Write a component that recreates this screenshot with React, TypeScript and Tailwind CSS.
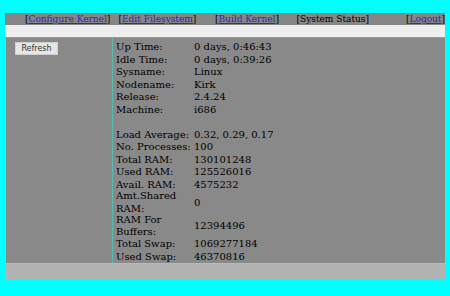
import React from "react";

const rows: [string, string][] = [
  ["Up Time:", "0 days, 0:46:43"],
  ["Idle Time:", "0 days, 0:39:26"],
  ["Sysname:", "Linux"],
  ["Nodename:", "Kirk"],
  ["Release:", "2.4.24"],
  ["Machine:", "i686"],
  ["", ""],
  ["Load Average:", "0.32, 0.29, 0.17"],
  ["No. Processes:", "100"],
  ["Total RAM:", "130101248"],
  ["Used RAM:", "125526016"],
  ["Avail. RAM:", "4575232"],
  ["Amt.Shared RAM:", "0"],
  ["RAM For Buffers:", "12394496"],
  ["Total Swap:", "1069277184"],
  ["Used Swap:", "46370816"],
];

export default function App() {
  const link = "text-[#2a2ab8] underline";
  return (
    <div className="w-[450px] h-[296px] bg-[#00ffff] pt-[13px] px-[5px] overflow-hidden">
      <div className="flex flex-col w-[440px]">
        <div
          className="h-[12px] bg-[#868686] flex items-center text-[9px] leading-[12px] text-black whitespace-nowrap"
          style={{ fontFamily: '"DejaVu Serif", serif' }}
        >
          <span className="ml-[20px] w-[94px]">
            [<span className={link}>Configure Kernel</span>]
          </span>
          <span className="w-[97px]">
            [<span className={link}>Edit Filesystem</span>]
          </span>
          <span className="w-[82px]">
            [<span className={link}>Build Kernel</span>]
          </span>
          <span className="w-[110px]">[System Status]</span>
          <span>
            [<span className={link}>Logout</span>]
          </span>
        </div>
        <div className="h-[12px] bg-[#eeeeee]" />
        <div className="flex h-[226px] bg-[#898989] border-t border-[#9a9a9a]">
          <div className="w-[108px] border-l border-[#8fc8c8] border-r border-r-[#5fb8b0] pt-[4px] pl-[9px]">
            <button
              className="block w-[43px] h-[13px] bg-[#e6e6e6] border border-[#d0d0d0] text-[8px] leading-[11px] text-[#333] text-center"
              style={{ fontFamily: '"DejaVu Sans", sans-serif' }}
            >
              Refresh
            </button>
          </div>
          <div
            className="pl-[3px] pt-[3px] text-[10px] leading-[12.5px] text-black grid grid-cols-[78px_1fr] items-center content-start"
            style={{ fontFamily: '"DejaVu Serif", serif' }}
          >
            {rows.map(([k, v], i) => (
              <React.Fragment key={i}>
                <div className="min-h-[12.5px]">{k}</div>
                <div className="min-h-[12.5px] whitespace-nowrap">{v}</div>
              </React.Fragment>
            ))}
          </div>
        </div>
        <div className="h-[16px] bg-[#b2b2b2] border-t border-[#a8c0c4]" />
      </div>
    </div>
  );
}
